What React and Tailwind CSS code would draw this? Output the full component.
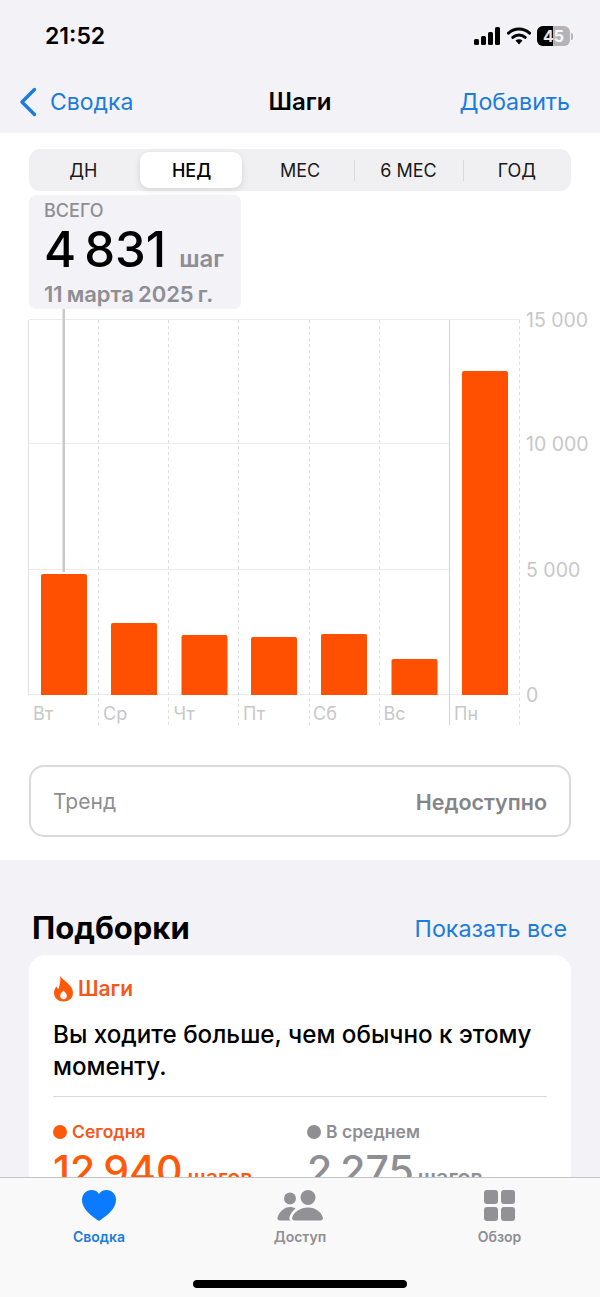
import React from "react";

const segments = ["ДН", "НЕД", "МЕС", "6 МЕС", "ГОД"];

const bars = [
  { day: "Вт", x: 41, top: 574 },
  { day: "Ср", x: 111, top: 623 },
  { day: "Чт", x: 181.5, top: 635 },
  { day: "Пт", x: 251, top: 637 },
  { day: "Сб", x: 321, top: 634 },
  { day: "Вс", x: 391.5, top: 659 },
  { day: "Пн", x: 462, top: 371 },
];

const yLabels = [
  { text: "15 000", y: 320 },
  { text: "10 000", y: 444 },
  { text: "5 000", y: 570 },
  { text: "0", y: 695 },
];

const dashed = [98.5, 168.5, 238.5, 309.5, 379.5, 519.5];

// chart is drawn in page coordinates, y offset by the svg top (305)
const StepsChart = () => (
  <svg width="600" height="425" viewBox="0 305 600 425" className="block" style={{ fontFamily: "Inter, sans-serif" }}>
    <path d="M29 319.500H520M29 443.500H450M29 569.500H450M29 694.500H520" stroke="#ececee" strokeWidth="1" fill="none" />
    <path d="M28.500 320V695" stroke="#e2e2e4" strokeWidth="1" fill="none" />
    <path d="M449.500 320V725" stroke="#d4d4d6" strokeWidth="1" fill="none" />
    {dashed.map((x) => (
      <line key={x} x1={x} x2={x} y1="320" y2="725" stroke="#dedee0" strokeDasharray="3 3" />
    ))}
    <rect x="62.500" y="309" width="2.500" height="263" fill="#c9c9cb" />
    {bars.map((b) => (
      <path
        key={b.day}
        d={`M${b.x} 695V${b.top + 2}a2 2 0 0 1 2-2H${b.x + 44}a2 2 0 0 1 2 2V695Z`}
        fill="#ff4f00"
      />
    ))}
    {bars.map((b) => (
      <text key={b.day} x={b.x - 8} y="720" fontSize="18" fill="#c7c7c9">
        {b.day}
      </text>
    ))}
    {yLabels.map((l) => (
      <text key={l.text} x="526" y={l.y + 7} fontSize="19.500" fill="#c7c7c9">
        {l.text}
      </text>
    ))}
  </svg>
);

const App = () => {
  return (
    <div className="relative h-[1297px] w-[600px] overflow-hidden bg-[#f2f2f7] font-['Inter',sans-serif] text-black">
      {/* Status bar + nav */}
      <div className="h-[133px] bg-[#f2f2f7]">
        <div className="flex h-[72px] items-center justify-between pl-[45px] pr-[27px]">
          <span className="text-[23px] font-semibold leading-none">21:52</span>
          <div className="flex items-center gap-[6px]">
            <svg width="27" height="18" viewBox="0 0 27 18">
              <rect x="0" y="12" width="5" height="6" rx="1.5" />
              <rect x="7" y="9" width="5" height="9" rx="1.5" />
              <rect x="14" y="5" width="5" height="13" rx="1.5" />
              <rect x="21" y="0" width="5" height="18" rx="1.5" />
            </svg>
            <svg width="24" height="18" viewBox="0 0 24 18">
              <path d="M1.5 6.2C7.4.7 16.6.7 22.5 6.2" stroke="#000" strokeWidth="3" fill="none" strokeLinecap="round" />
              <path d="M5.8 10.4c3.6-3.3 8.800-3.300 12.400 0" stroke="#000" strokeWidth="3" fill="none" strokeLinecap="round" />
              <path d="M8.500 13.400 12 17.500l3.500-4.100c-2-1.700-5-1.700-7 0Z" />
            </svg>
            <div className="flex items-center">
              <div className="relative flex h-[20px] w-[33px] items-center justify-center overflow-hidden rounded-[6px] bg-[#b4b4b6]">
                <div className="absolute inset-y-0 left-0 w-[16px] bg-black" />
                <span className="relative text-[16px] font-bold leading-none text-white/90">45</span>
              </div>
              <div className="ml-[1px] h-[7px] w-[2px] rounded-r-full bg-[#b4b4b6]" />
            </div>
          </div>
        </div>
        <div className="relative flex h-[61px] items-start justify-between pl-[19px] pr-[30px] pt-[14px]">
          <div className="flex items-center gap-[13px] text-[#1c7cdc]">
            <svg width="18" height="30" viewBox="0 0 18 30" fill="none">
              <path d="M15.500 2.500 3 15l12.500 12.500" stroke="#1c7cdc" strokeWidth="3.400" strokeLinecap="round" strokeLinejoin="round" />
            </svg>
            <span className="text-[23px] leading-[32px]">Сводка</span>
          </div>
          <span className="absolute left-0 right-0 top-[14px] text-center text-[24px] font-semibold leading-[32px]">Шаги</span>
          <span className="text-[23.200px] leading-[32px] text-[#1c7cdc]">Добавить</span>
        </div>
      </div>

      {/* Chart panel */}
      <div className="h-[727px] bg-white">
        <div className="px-[29px] pt-[16px]">
          <div className="flex h-[42px] items-center rounded-[11px] bg-[#f0f0f2]">
            {segments.map((s, i) => (
              <div key={s} className="relative flex h-[36px] flex-1 items-center justify-center">
                {i === 1 && (
                  <div className="absolute inset-y-0 left-[3px] right-[4px] rounded-[9px] bg-white shadow-[0_2px_6px_rgba(0,0,0,0.12)]" />
                )}
                <div className={i === 1 ? "relative text-[18px] font-medium" : "text-[18px] text-[#1a1a1a]"}>{s}</div>
                {i > 2 && <div className="absolute left-0 h-[21px] w-px bg-[#d9d9db]" />}
              </div>
            ))}
          </div>
          <div className="mt-[4px] h-[114px] w-[212px] rounded-[7px] bg-[#f2f2f7] px-[15px] pt-[6px]">
            <div className="text-[18px] font-medium leading-[20px] text-[#8e8e93]">ВСЕГО</div>
            <div className="mt-[3px] flex items-baseline gap-[13px]">
              <span className="text-[49px] font-medium leading-[52px] [word-spacing:-5px]">4 831</span>
              <span className="text-[24px] font-semibold leading-none text-[#8e8e93]">шаг</span>
            </div>
            <div className="mt-[5px] text-[22px] font-semibold leading-[26px] text-[#8e8e93] [word-spacing:-1.500px]">11 марта 2025 г.</div>
          </div>
        </div>
        <div className="-mt-[4px]">
          <StepsChart />
        </div>
        <div className="mx-[29px] mt-[35px] flex h-[72px] items-center justify-between rounded-[15px] border-2 border-[#dadadc] pb-[1px] pl-[22px] pr-[22px] pt-[3px]">
          <span className="text-[21px] text-[#8e8e93]">Тренд</span>
          <span className="text-[21.500px] font-semibold text-[#858589]">Недоступно</span>
        </div>
      </div>

      {/* Highlights */}
      <div className="px-[29px] pt-[46px]">
        <div className="flex h-[49px] items-center justify-between pb-[4px] pl-[3px] pr-[4px]">
          <span className="mb-[3px] text-[31px] font-bold leading-none">Подборки</span>
          <span className="text-[23.300px] leading-none text-[#1c7cdc]">Показать все</span>
        </div>
        <div className="h-[400px] rounded-[16px] bg-white px-[24px] pt-[19px]">
          <div className="flex h-[28px] items-center gap-[4px] text-[#f4581c]">
            <svg width="21" height="27" viewBox="0 0 21 27">
              <path
                fillRule="evenodd"
                fill="#ff5a0a"
                d="M7 1c2 3 5 4.500 8 7.500 2.500 2.500 5 5 5 9.500 0 5-4.500 8.500-9.500 8.500S1 23 1 18c0-3 1.200-5 2.500-6.500.4 1.200 1 2 2 2.500C6.500 10 8 5.500 7 1ZM10.500 15.500C8.500 17.500 7.200 19 7.200 21c0 1.800 1.500 3.200 3.300 3.200s3.300-1.400 3.300-3.200c0-2-1.300-3.500-3.300-5.500Z"
              />
            </svg>
            <span className="text-[21px] font-semibold leading-none">Шаги</span>
          </div>
          <p className="mt-[17px] w-[490px] text-[24.200px] font-medium leading-[32px]">
            Вы ходите больше, чем обычно к этому моменту.
          </p>
          <div className="mt-[13px] h-px bg-[#d9d9db]" />
          <div className="mt-[24px] flex">
            <div className="w-[254px]">
              <div className="flex items-center gap-[5px] text-[#f4581c]">
                <span className="h-[14px] w-[14px] rounded-full bg-[#ff5a0a]" />
                <span className="text-[17.500px] font-semibold leading-[22px]">Сегодня</span>
              </div>
              <div className="mt-[3px] flex items-baseline gap-[5px]">
                <span className="text-[41px] font-medium leading-[48px] text-[#ff5a0a] [word-spacing:-3px]">12 940</span>
                <span className="text-[21.500px] font-semibold text-[#ff5a0a]">шагов</span>
              </div>
            </div>
            <div>
              <div className="flex items-center gap-[5px] text-[#8e8e93]">
                <span className="h-[14px] w-[14px] rounded-full bg-[#8e8e93]" />
                <span className="text-[17.500px] font-semibold leading-[22px]">В среднем</span>
              </div>
              <div className="mt-[3px] flex items-baseline gap-[4px] text-[#8e8e93]">
                <span className="text-[41px] font-medium leading-[48px] [word-spacing:-3px]">2 275</span>
                <span className="text-[21.500px] font-semibold">шагов</span>
              </div>
            </div>
          </div>
        </div>
      </div>

      {/* Tab bar */}
      <div className="absolute inset-x-0 bottom-0 h-[120px] border-t border-[#c4c4c6] bg-[#f9f9f9]">
        <div className="flex pt-[12px]">
          <div className="flex w-[198px] flex-col items-center text-[#1c7cdc]">
            <svg width="34" height="31" viewBox="0 0 34 35" preserveAspectRatio="none">
              <path
                fill="#0a7aff"
                d="M17 35C14 32.500 0 23.500 0 11 0 4.500 4.500 0 9.500 0 12.800 0 15.500 1.800 17 4.500 18.500 1.800 21.200 0 24.500 0 29.500 0 34 4.500 34 11 34 23.500 20 32.500 17 35Z"
              />
            </svg>
            <span className="mt-[6px] text-[14px] font-semibold leading-[20px]">Сводка</span>
          </div>
          <div className="flex w-[204px] flex-col items-center text-[#8e8e93]">
            <svg width="46" height="31" viewBox="0 0 46 31" fill="#929296">
              <circle cx="13" cy="8.500" r="6" />
              <circle cx="31" cy="7.500" r="7.500" />
              <path d="M13 17c2 0 4 .5 5.500 1.500-3 2.500-5 5.500-6 8.500-.5 1.500 0 2.500 1 3.500H3c-2 0-3-1.500-2.500-3C2.500 21.500 7.500 17 13 17Z" />
              <path d="M17.500 30.500c-2 0-2.800-1.500-2.300-3C16.700 22 23.500 17.500 31 17.500s13.300 4.500 14.800 10c.5 1.500-.3 3-2.300 3Z" />
            </svg>
            <span className="mt-[6px] text-[14px] font-semibold leading-[20px]">Доступ</span>
          </div>
          <div className="flex w-[195px] flex-col items-center text-[#8e8e93]">
            <div className="grid h-[31px] w-[31px] grid-cols-2 gap-[3px]">
              <div className="rounded-[3px] bg-[#929296]" />
              <div className="rounded-[3px] bg-[#929296]" />
              <div className="rounded-[3px] bg-[#929296]" />
              <div className="rounded-[3px] bg-[#929296]" />
            </div>
            <span className="mt-[6px] text-[14px] font-semibold leading-[20px]">Обзор</span>
          </div>
        </div>
        <div className="absolute bottom-[9px] left-[193px] h-[8px] w-[214px] rounded-full bg-black" />
      </div>
    </div>
  );
};

export default App;
